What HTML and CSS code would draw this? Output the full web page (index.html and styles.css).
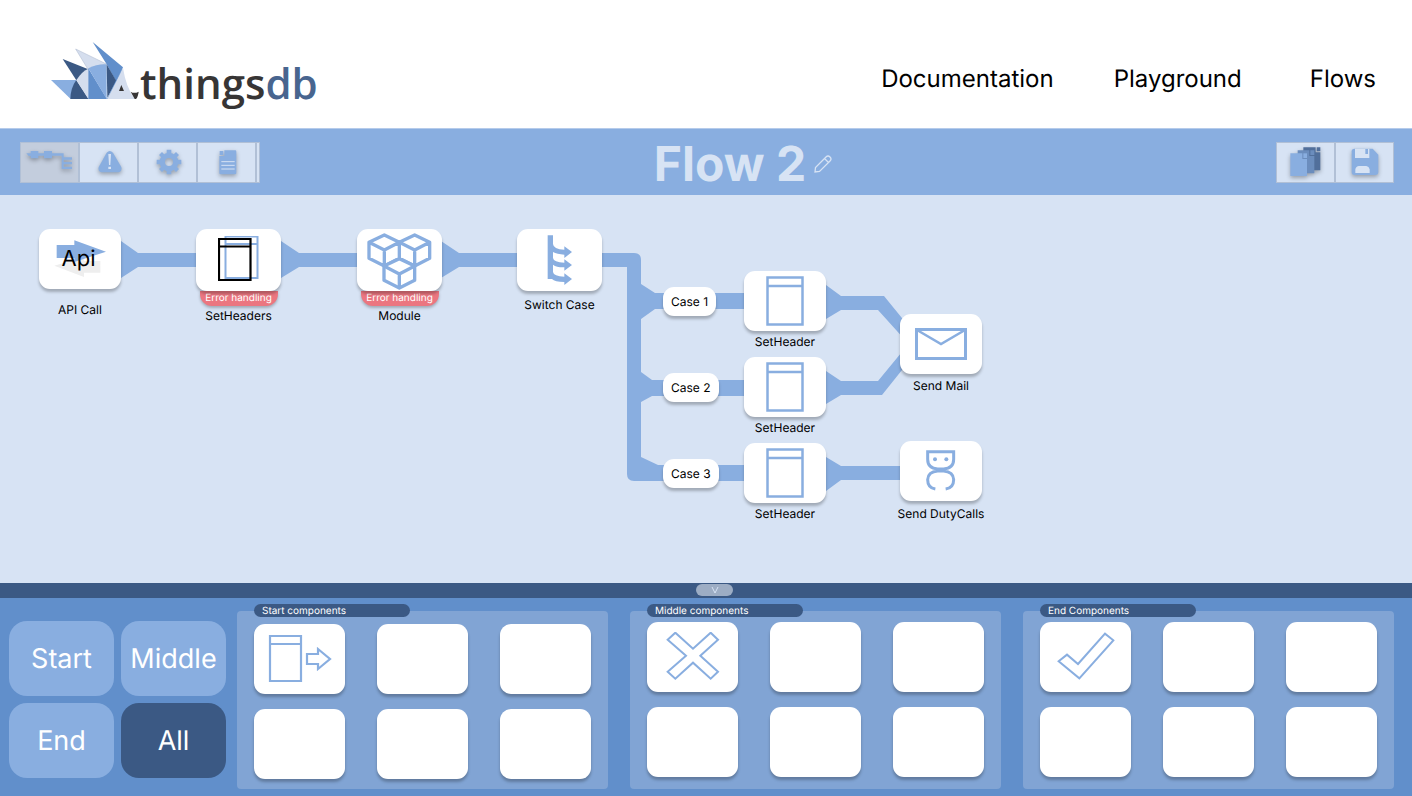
FILE: index.html
```html
<!DOCTYPE html>
<html lang="en">
<head>
<meta charset="utf-8">
<title>ThingsDB Flows</title>
<link rel="stylesheet" href="styles.css">
</head>
<body>
<svg class="defs" aria-hidden="true">
  <symbol id="window" viewBox="0 0 38 50">
    <path d="M1.500 1.500H36.500V48.500H1.500ZM1.500 10H36.500" fill="none" stroke="currentColor" stroke-width="2.500"/>
  </symbol>
</svg>

<header class="header">
  <a class="logo" href="#" aria-label="thingsdb">
    <svg class="logo-mark" viewBox="30 36 270 174" aria-hidden="true">
      <path fill="#89aee0" d="M33 153H110L92 210Z"/>
      <path fill="#3b5984" d="M68 90L145 121L109 154Z"/>
      <path fill="#3b5984" d="M109 153L146 210H91Q92 176 109 153Z"/>
      <path fill="#d5deee" d="M109 154Q124 128 145 119V210Z"/>
      <path fill="#d5deee" stroke="#b8c2d6" stroke-width="2" d="M107 60L199 105Q166 108 144 121Z"/>
      <path fill="#618fcb" d="M145 118L201 210H145Z"/>
      <path fill="#89aee0" d="M145 118Q170 105 200 106V210Z"/>
      <path fill="#618fcb" d="M158 39L249 115L228 157L200 106Z"/>
      <path fill="#3b5984" d="M200 106L229 156L202 206Z"/>
      <path fill="#618fcb" d="M249 115L228 154L201 210H220Z"/>
      <path fill="#d5deee" d="M249 117Q258 175 284 210H202L229 157Z"/>
      <path fill="#373535" d="M244 168L252 186H237ZM272 188Q282 195 296 188Q294 204 288 210H284Z"/>
    </svg>
    <span class="logo-text">things<span class="logo-db">db</span></span>
  </a>
  <nav class="nav">
    <a href="#">Documentation</a>
    <a href="#">Playground</a>
    <a href="#" class="nav-last">Flows</a>
  </nav>
</header>

<div class="toolbar">
  <div class="tools tools-left">
    <button class="tool active" aria-label="Flow">
      <svg width="48" height="24" viewBox="78 86 144 72" aria-hidden="true"><path d="M79 96H92V89H115V96H132V89H156V96H191V108H216V115H191V122H216V129H191V136H216V143H185V103H156V111H132V103H115V111H92V104H86Z"/></svg>
    </button>
    <button class="tool" aria-label="Errors">
      <svg width="24" height="22" viewBox="292 81 72 66" aria-hidden="true"><path d="M318 86Q327 76 337 86L362 129Q365 144 352 145H304Q291 144 294 129Z"/><path class="cut" d="M323 90H331L329 123H325ZM323 128H331V135H323Z"/></svg>
    </button>
    <button class="tool" aria-label="Settings">
      <svg width="26" height="26" viewBox="-39 -39 78 78" aria-hidden="true">
        <circle r="20" fill="none" stroke="currentColor" stroke-width="16"/>
        <path d="M-7 -37H7V-24H-7ZM-7 24H7V37H-7ZM-37 -7H-24V7H-37ZM24 -7H37V7H24ZM-30 -21L-21 -30L-12 -21L-21 -12ZM30 -21L21 -30L12 -21L21 -12ZM-30 21L-21 30L-12 21L-21 12ZM30 21L21 30L12 21L21 12Z"/>
      </svg>
    </button>
    <button class="tool" aria-label="Log">
      <svg width="18" height="25" viewBox="659 80 54 75" aria-hidden="true"><path d="M675 81H708Q711 81 711 85V149Q711 153 707 153H664Q660 153 660 149V98H675ZM661 83H672V95H661Z"/><path d="M666 115H706M666 126H706M666 137H706" stroke="#d7e3f4" stroke-width="3"/></svg>
    </button>
  </div>
  <div class="title">
    <h1>Flow 2</h1>
    <button class="edit" aria-label="Rename flow">
      <svg width="18" height="18" viewBox="0 0 18 18" fill="none" stroke="currentColor" stroke-width="1.300" aria-hidden="true"><path d="M1 17L1.500 12.500L12 2Q14 0 16 2Q18 4 16 6L5.500 16.500ZM10.500 3.500L14.500 7.500"/></svg>
    </button>
  </div>
  <div class="tools tools-right">
    <button class="tool" aria-label="Copy">
      <svg width="32" height="30" viewBox="83 53 96 90" aria-hidden="true">
        <path fill="#516f9b" d="M123 54H160V69H174V123H123ZM163 54H174V66H163Z"/>
        <path fill="#6b8dbd" d="M106 63H141V80H156V132H106ZM144 63H156V77H144Z"/>
        <path d="M84 72H120V89H134V140H84Z"/><path d="M123 72H134V86H123Z"/>
      </svg>
    </button>
    <button class="tool" aria-label="Save">
      <svg width="28" height="28" viewBox="267 60 84 84" aria-hidden="true"><path d="M277 62H332L349 80V132Q349 141 340 141H277Q269 141 269 132V70Q269 62 277 62Z"/><path class="cut" d="M279 62H322V90H279ZM280 135V124Q282 115 291 114H313Q321 115 323 124V135Z"/><path d="M310 63H318V78H310Z"/></svg>
    </button>
  </div>
</div>

<main class="canvas">
  <svg class="links" aria-hidden="true">
    <path d="M121 46L138 58H197V72H138L121 83Z"/>
    <path d="M281 46L299 58H358V72H299L281 83Z"/>
    <path d="M441 46L459 58H518V72H459L441 83Z"/>
    <path d="M601 58H634Q641 58 641 65V89L655 98H745V114H655L641 124V177L652 185H745V201H652L641 207V262L658 270H745V286H634Q627 286 627 279V72H601Z"/>
    <path d="M826 90L841 101H884L906 128V146L878 115H841L826 124Z"/>
    <path d="M826 176L841 186H878L906 152V170L882 200H841L826 209Z"/>
    <path d="M826 262L841 271H901V285H841L826 296Z"/>
  </svg>

  <figure class="node n-api">
    <div class="card">
      <svg width="52" height="38" viewBox="0 0 156 114" aria-hidden="true"><path fill="#eee" d="M1 77L90 50V63H139V98H90V111Z"/><path fill="#89aee0" d="M8 15H61V1L156 35L61 66V54H8Z"/></svg>
      <span class="api">Api</span>
    </div>
    <figcaption>API Call</figcaption>
  </figure>

  <figure class="node wide failing n-headers">
    <div class="card">
      <svg width="42" height="48" viewBox="1 1 42 48" fill="none" aria-hidden="true"><path d="M8.500 1.500H40.500V43H8.500ZM8.500 9H40.500" stroke="#89aee0" stroke-width="2"/><path d="M2 4H33.500V45H2ZM2 11.500H33.500" stroke="#000" stroke-width="2.200"/></svg>
    </div>
    <div class="error">Error handling</div>
    <figcaption>SetHeaders</figcaption>
  </figure>

  <figure class="node wide failing n-module">
    <div class="card">
      <svg class="low" width="66" height="58" viewBox="200 51 198 174" fill="none" stroke="#89aee0" stroke-width="10" stroke-linejoin="round" aria-hidden="true">
        <path d="M252 60L297 82V130L252 153L206 130V82ZM206 82L252 105L297 82M252 105V153M343 60L388 82V130L343 153L297 130V82ZM297 82L343 105L388 82M343 105V153"/>
        <path fill="#fff" d="M297 131L343 153V196L297 219L251 196V153Z"/><path d="M251 153L297 177L343 153M297 177V219"/>
      </svg>
    </div>
    <div class="error">Error handling</div>
    <figcaption>Module</figcaption>
  </figure>

  <figure class="node wide n-switch">
    <div class="card">
      <svg width="26" height="50" viewBox="745 61 78 150" aria-hidden="true"><path fill="#89aee0" d="M747 62H763V88Q764 104 797 105V95L820 112L797 130V120Q775 119 763 112V130Q765 143 797 144V134L820 151L797 168V158Q775 159 763 150V172Q765 185 797 186V176L820 193L797 211V202Q768 202 760 193H747Z"/></svg>
    </div>
    <figcaption>Switch Case</figcaption>
  </figure>

  <div class="case case-1">Case 1</div>
  <div class="case case-2">Case 2</div>
  <div class="case case-3">Case 3</div>

  <figure class="node n-set1">
    <div class="card"><svg class="window" aria-hidden="true"><use href="#window"/></svg></div>
    <figcaption>SetHeader</figcaption>
  </figure>
  <figure class="node n-set2">
    <div class="card"><svg class="window" aria-hidden="true"><use href="#window"/></svg></div>
    <figcaption>SetHeader</figcaption>
  </figure>
  <figure class="node n-set3">
    <div class="card"><svg class="window" aria-hidden="true"><use href="#window"/></svg></div>
    <figcaption>SetHeader</figcaption>
  </figure>

  <figure class="node n-mail">
    <div class="card">
      <svg width="52" height="32" viewBox="0 0 52 32" fill="none" stroke="#89aee0" aria-hidden="true"><path stroke-width="3" d="M1.500 1.500H50.500V30.500H1.500Z"/><path stroke-width="2.500" d="M2 2L26 16L50 2"/></svg>
    </div>
    <figcaption>Send Mail</figcaption>
  </figure>
  <figure class="node n-duty">
    <div class="card">
      <svg width="30" height="42" viewBox="317 569 90 126" fill="none" stroke="#89aee0" stroke-width="9" aria-hidden="true"><path d="M322 574H400V597Q400 624 370 626H352Q322 624 322 597ZM345 686Q322 682 322 658Q323 634 352 632H370Q399 634 400 658Q400 682 376 686"/><g fill="#89aee0" stroke="none"><circle cx="344" cy="597" r="6"/><circle cx="378" cy="597" r="6"/></g></svg>
    </div>
    <figcaption>Send DutyCalls</figcaption>
  </figure>
</main>

<div class="divider">
  <button class="collapse" aria-label="Collapse components"><svg width="8" height="7" viewBox="0 0 8 7" fill="none" stroke="currentColor" aria-hidden="true"><path d="M1 0L4 6L7 0"/></svg></button>
</div>

<footer class="panel">
  <div class="filters">
    <button>Start</button>
    <button>Middle</button>
    <button>End</button>
    <button class="selected">All</button>
  </div>
  <section class="group group-start">
    <h2>Start components</h2>
    <button class="slot" aria-label="Request">
      <svg width="64" height="50" viewBox="0 0 64 50" fill="none" stroke="#89aee0" stroke-width="2.200" aria-hidden="true"><path d="M2 2H33V47H2ZM2 10H33M39 20H50V15L62 25L50 35V30H39Z"/></svg>
    </button>
    <button class="slot" aria-label="Empty"></button>
    <button class="slot" aria-label="Empty"></button>
    <button class="slot" aria-label="Empty"></button>
    <button class="slot" aria-label="Empty"></button>
    <button class="slot" aria-label="Empty"></button>
  </section>
  <section class="group">
    <h2>Middle components</h2>
    <button class="slot" aria-label="Cross">
      <svg width="54" height="50" viewBox="198 170 162 150" fill="none" stroke="#89aee0" stroke-width="6" aria-hidden="true"><path d="M226 172L279 220L332 172L354 193L301 241L354 289L332 310L279 262L226 310L203 289L258 241L203 193Z"/></svg>
    </button>
    <button class="slot" aria-label="Empty"></button>
    <button class="slot" aria-label="Empty"></button>
    <button class="slot" aria-label="Empty"></button>
    <button class="slot" aria-label="Empty"></button>
    <button class="slot" aria-label="Empty"></button>
  </section>
  <section class="group">
    <h2>End Components</h2>
    <button class="slot" aria-label="Check">
      <svg width="58" height="50" viewBox="141 170 174 150" fill="none" stroke="#89aee0" stroke-width="6" aria-hidden="true"><path d="M146 258L171 238L204 266L285 175L310 195L208 309Z"/></svg>
    </button>
    <button class="slot" aria-label="Empty"></button>
    <button class="slot" aria-label="Empty"></button>
    <button class="slot" aria-label="Empty"></button>
    <button class="slot" aria-label="Empty"></button>
    <button class="slot" aria-label="Empty"></button>
  </section>
</footer>
</body>
</html>
```
FILE: styles.css
```css
* { box-sizing: border-box; }

:root {
  --blue: #89aee0;
  --pale: #d7e3f4;
  --navy: #3b5984;
  --mid: #618fcb;
}

body {
  margin: 0;
  min-height: 100vh;
  display: flex;
  flex-direction: column;
  font-family: Inter, "Liberation Sans", sans-serif;
  font-size: 12px;
  line-height: 16px;
  text-rendering: geometricPrecision;
  color: #000;
  background: #fff;
}

button {
  font: inherit;
  text-rendering: inherit;
  border: 0;
  padding: 0;
  cursor: pointer;
}

svg { display: block; }
.defs { position: absolute; width: 0; height: 0; }

.header {
  min-height: 128px;
  padding: 29px 36px 0 50px;
  display: flex;
  align-items: center;
  justify-content: space-between;
}
.logo {
  margin-bottom: 3px;
  display: flex;
  align-items: baseline;
  text-decoration: none;
}
.logo-mark { width: 90px; height: 58px; }
.logo-text {
  font-family: "Open Sans", sans-serif;
  font-size: 42px;
  font-weight: 600;
  line-height: 58px;
  color: #373535;
}
.logo-db { color: #48658f; }
.nav {
  display: flex;
  gap: 60px;
  font-size: 24px;
  line-height: 32px;
}
.nav a { color: #000; text-decoration: none; }
.nav-last { margin-left: 8px; }

.toolbar {
  min-height: 67px;
  padding: 0 18px 0 20px;
  display: grid;
  grid-template-columns: 1fr auto 1fr;
  align-items: center;
  background: var(--blue);
  border-top: 1px solid #b5cbeb;
}
.tools {
  display: flex;
  background: var(--pale);
  border: 1px solid #b1c0d6;
}
.tools-left { justify-self: start; padding-right: 2px; }
.tools-right { justify-self: end; }
.tool {
  width: 59px;
  height: 39px;
  display: grid;
  place-items: center;
  color: var(--blue);
  background: var(--pale);
  border-right: 2px solid #b1c0d6;
}
.tool:not(:first-child) { padding-left: 2px; }
.tools-right .tool:last-child { width: 57px; padding-left: 0; border-right: 0; }
.tool.active { background: #c3cddd; }
.tool svg { fill: currentColor; filter: drop-shadow(0 2px 2px rgba(0, 0, 0, .3)); }
.tool .cut { fill: var(--pale); }
.title {
  padding: 4px 0 0 72px;
  display: flex;
  align-items: center;
  gap: 8px;
  color: var(--pale);
}
.title h1 {
  margin: 0;
  font-size: 48px;
  line-height: 56px;
  font-weight: 700;
}
.edit { color: inherit; background: none; }

.canvas {
  position: relative;
  flex: 1;
  min-height: 388px;
  background: var(--pale);
}
.links {
  position: absolute;
  left: 0;
  top: 0;
  width: 1000px;
  height: 388px;
  fill: var(--blue);
}
.node {
  position: absolute;
  width: 82px;
  margin: 0;
  display: flex;
  flex-direction: column;
  align-items: center;
  gap: 3px;
}
.node.wide { width: 85px; gap: 6px; }
.node.failing { gap: 0; }
.card {
  position: relative;
  width: 100%;
  height: 60px;
  display: grid;
  place-items: center;
  background: #fff;
  border-radius: 11px;
  box-shadow: 0 3px 3px rgba(0, 0, 0, .25);
}
.wide .card { height: 62px; }
.low { margin-top: 2px; }
.node figcaption { white-space: nowrap; }
.error {
  width: 78px;
  height: 15px;
  margin-bottom: 2px;
  border-radius: 0 0 12px 12px;
  background: #eb7680;
  color: #fff;
  font-size: 10px;
  line-height: 15px;
  text-align: center;
  white-space: nowrap;
  box-shadow: 0 2px 3px rgba(0, 0, 0, .25);
}
.api {
  position: absolute;
  inset: 0;
  display: grid;
  place-items: center;
  padding-right: 3px;
  font-size: 22px;
}
.window { width: 38px; height: 50px; color: var(--blue); }

.n-api { left: 39px; top: 34px; gap: 13px; }
.n-headers { left: 196px; top: 34px; }
.n-module { left: 357px; top: 34px; }
.n-switch { left: 517px; top: 34px; }
.n-set1 { left: 744px; top: 76px; }
.n-set2 { left: 744px; top: 162px; }
.n-set3 { left: 744px; top: 248px; }
.n-mail { left: 900px; top: 119px; gap: 4px; }
.n-duty { left: 900px; top: 246px; gap: 5px; }

.case {
  position: absolute;
  left: 663px;
  padding: 6px 8px;
  line-height: 17px;
  white-space: nowrap;
  background: #fff;
  border-radius: 11px;
  box-shadow: 0 3px 3px rgba(0, 0, 0, .25);
}
.case-1 { top: 92px; }
.case-2 { top: 178px; }
.case-3 { top: 264px; }

.divider {
  height: 15px;
  padding: 1px 0 0 17px;
  display: flex;
  align-items: flex-start;
  justify-content: center;
  background: var(--navy);
}
.collapse {
  width: 37px;
  height: 12px;
  display: grid;
  place-items: center;
  border-radius: 6px;
  color: var(--pale);
  background: #9dadc4;
}

.panel {
  padding: 13px 18px 7px 9px;
  display: flex;
  gap: 22px;
  background: var(--mid);
}
.filters {
  display: grid;
  grid-template-columns: 105px 105px;
  grid-auto-rows: 75px;
  gap: 7px;
  margin-right: -11px;
  padding-top: 10px;
}
.filters button {
  font-size: 27px;
  color: #fff;
  background: var(--blue);
  border-radius: 18px;
}
.filters .selected { background: var(--navy); }
.group {
  position: relative;
  flex: 1;
  min-height: 178px;
  padding: 11px 17px 12px;
  display: grid;
  grid-template-columns: repeat(3, 91px);
  grid-auto-rows: 70px;
  justify-content: space-between;
  gap: 15px 0;
  background: #81a4d4;
  border-radius: 4px;
}
.group-start { padding-top: 13px; padding-bottom: 10px; }
.group h2 {
  position: absolute;
  left: 17px;
  top: -7px;
  width: 156px;
  margin: 0;
  padding: 1px 0 0 8px;
  border-radius: 7px;
  font-size: 10px;
  line-height: 12px;
  font-weight: 400;
  color: #fff;
  background: var(--navy);
}
.slot {
  display: grid;
  place-items: center;
  background: #fff;
  border-radius: 11px;
  box-shadow: 0 3px 3px rgba(0, 0, 0, .25);
}
```
